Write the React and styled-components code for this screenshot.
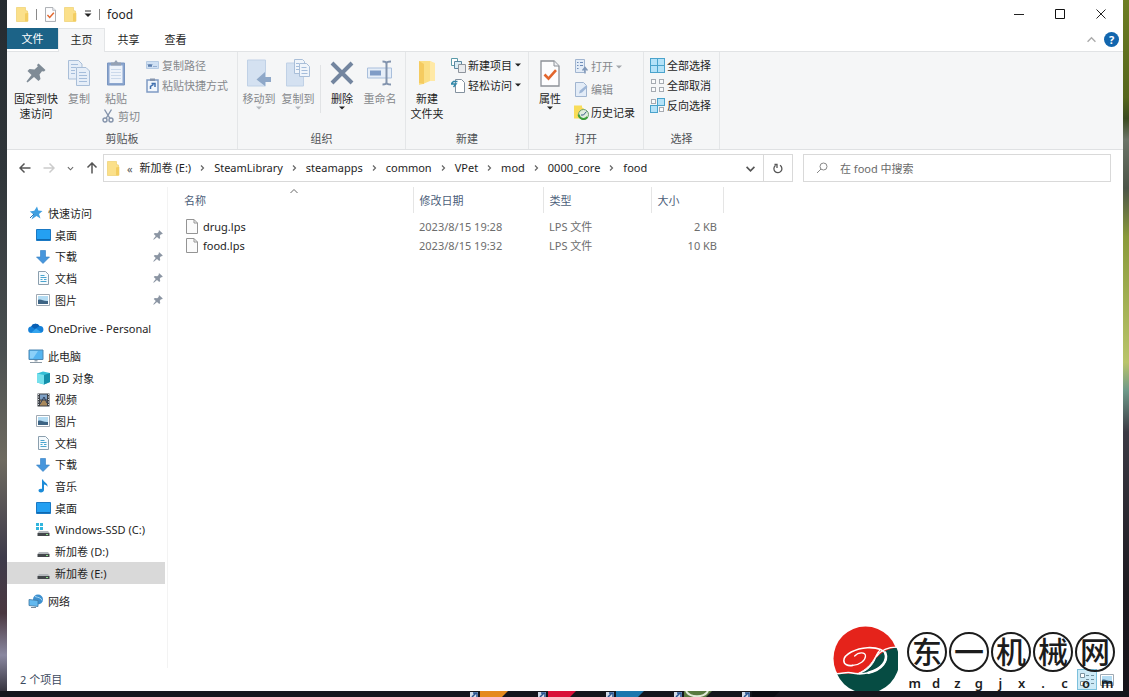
import React from 'react'
import styled, { createGlobalStyle } from 'styled-components'

const GlobalStyle = createGlobalStyle`
*{
    box-sizing: border-box;
}
body{
    margin: 0;
    font-family: 'Noto Sans', 'Noto Sans CJK SC', sans-serif;
    font-size: 11px;
    line-height: 15px;
    color: #1e1e1e;
}
button, input{
    font: inherit;
    color: inherit;
    padding: 0;
    border: 0;
    background: none;
}
a{
    color: inherit;
    text-decoration: none;
}
ul{
    list-style: none;
    margin: 0;
    padding: 0;
}
svg{
    display: block;
    flex: none;
}
`

/* ---------- icons ---------- */

const Folder = ({ w = 13, h = 15 }) => (
    <svg width={w} height={h} viewBox="0 0 13 15">
        <path d="M0.5 0.5h9v3l2 .5v10.5h-11z" fill="#fbe08a" stroke="#eccb62" strokeWidth=".6" />
        <path d="M9 6.5l3.3-.7v8.5H9z" fill="#f3cd60" />
    </svg>
)

const BigFolder = () => (
    <svg width="19" height="26" viewBox="0 0 19 26">
        <path d="M1 1h11l5 3v17h-5l-7 3-4 1z" fill="#fbdf86" />
        <path d="M1 1l5 3v20l-5-1z" fill="#f5cb60" />
        <path d="M12 1l5 2v18h-5z" fill="#ffe9a6" />
    </svg>
)

const CheckDoc = ({ w = 13, h = 15 }) => (
    <svg width={w} height={h} viewBox="0 0 20 27">
        <path d="M1 1h13l5 5v20H1z" fill="#fdfdfe" stroke="#8d9198" strokeWidth="1.3" />
        <path d="M14 1v5h5" fill="#eef0f3" stroke="#8d9198" />
        <path d="M4.5 14.5l4 4.2 7.5-8.5" fill="none" stroke="#e2662d" strokeWidth="2.6" />
    </svg>
)

const Pin = ({ size = 11, color = '#8b95a3' }) => (
    <svg width={size} height={size} viewBox="0 0 20 20">
        <path d="M12.500 .5l7 6.500-1.500 1.500-2-.2-2.500 3.200 1 4.500-2 2-4.500-4L1.500 19.500.5 18.500l5-6.500-4-4 2-2 5 .5 3.300-3-.8-1.500z" fill={color} />
    </svg>
)

const CopyDocs = () => (
    <svg width="24" height="28" viewBox="0 0 24 28">
        <g fill="#e6eef8" stroke="#a9bed8">
            <path d="M1.500 1.500h10l3.500 3.500v15h-13.500z" />
            <path d="M9.500 8.500h9.500l3.500 3.500v14.500h-13z" />
        </g>
        <path d="M4 5.500h7M4 8.500h5M4 11.500h4M4 14.500h4M12 13.500h7M12 16.500h8M12 19.500h8M12 22.500h8" stroke="#a5bddb" />
    </svg>
)

const Clipboard = () => (
    <svg width="20" height="28" viewBox="0 0 20 28">
        <path d="M1.500 4h17v22h-17z" fill="#8ba6cf" stroke="#7a96c1" />
        <path d="M3.500 6.500h13v17.500h-13z" fill="#eef3fa" />
        <path d="M5 3.500h3l2-2.500 2 2.500h3v3h-10z" fill="#95a1b3" />
        <path d="M5 10.500h10M5 13.500h10M5 16.500h10M5 19.500h10" stroke="#cbd9eb" />
    </svg>
)

const Scissors = () => (
    <svg width="12" height="14" viewBox="0 0 12 14" fill="none" stroke="#8493ab" strokeWidth="1.400">
        <path d="M2.500 0.500L8 9.500M9.500 0.500L4 9.500" />
        <circle cx="3" cy="11" r="2" />
        <circle cx="9" cy="11" r="2" />
    </svg>
)

const PathIcon = () => (
    <svg width="13" height="10" viewBox="0 0 13 10">
        <path d="M.5 1.500h12v7h-12z" fill="#cfe0f3" stroke="#b6cbe3" />
        <path d="M2 4l1 3 1-3 1 3 1-3M7.500 6.500h1M9.500 6.500h1" fill="none" stroke="#5d7fae" />
    </svg>
)

const ShortcutIcon = () => (
    <svg width="13" height="15" viewBox="0 0 13 15">
        <path d="M1 2h11v12H1z" fill="#f1f6fc" stroke="#7f9bc4" strokeWidth="1.500" />
        <path d="M4 .5h5v2.500H4z" fill="#8594ac" />
        <path d="M4.500 11V8.500l3-2M5.500 5.500h3.500v3.500" fill="none" stroke="#3f6fae" strokeWidth="1.500" />
    </svg>
)

const MoveTo = () => (
    <svg width="26" height="28" viewBox="0 0 26 28">
        <path d="M1.500 1h18v26h-18z" fill="#d4e1f1" stroke="#c0d1e6" />
        <path d="M25 18h-6v-5l-8.500 7.500 8.500 6.500v-4h6z" fill="#8fa8c8" />
    </svg>
)

const CopyTo = () => (
    <svg width="26" height="28" viewBox="0 0 26 28">
        <path d="M1.500 4h17v23h-17z" fill="#d4e1f1" stroke="#c0d1e6" />
        <g fill="#f0f5fb" stroke="#a9bed8">
            <path d="M9.500 .5h8l2 2v12h-10z" />
            <path d="M14.500 4.500h7l3 3v10h-10z" />
        </g>
        <path d="M16.500 8.500h5M16.500 11.500h6M16.500 14.500h6M11 4.500h3M11 7.500h3M11 10.500h3" stroke="#a5bddb" />
    </svg>
)

const DeleteX = () => (
    <svg width="24" height="26" viewBox="0 0 24 26">
        <path d="M2 3l20 20M22 3L2 23" stroke="#73859f" strokeWidth="4" />
    </svg>
)

const Rename = () => (
    <svg width="26" height="26" viewBox="0 0 26 26">
        <path d="M.5 8h24v10H.5z" fill="#e6eef8" stroke="#a9bfdc" />
        <path d="M3 10.500h11v5H3z" fill="#7f9cc6" />
        <path d="M15.500 1.500c3 0 4 .5 4 2v19c0 1.500-1 2-4 2M24 1.500c-3 0-4.500.5-4.500 2M24 24.500c-3 0-4.500-.5-4.500-2" fill="none" stroke="#8293ad" strokeWidth="2" />
    </svg>
)

const NewItem = () => (
    <svg width="15" height="15" viewBox="0 0 15 15">
        <path d="M.5.5h6v7h-6z" fill="#fff" stroke="#5b9aa9" />
        <path d="M3.500 3.500h7v7h-7z" fill="#d9ecf4" stroke="#5b87a0" />
        <path d="M7.500 6.500h7v8h-7z" fill="#e9ebee" stroke="#8e949c" />
    </svg>
)

const EasyAccess = () => (
    <svg width="15" height="15" viewBox="0 0 15 15">
        <path d="M4.500 1.500h6l3 3v10h-9z" fill="#fff" stroke="#83919f" />
        <path d="M6.500 3.500H2.500L0 6h5L2.500 9" fill="none" stroke="#2f86a8" strokeWidth="1.400" />
    </svg>
)

const OpenIcon = () => (
    <svg width="13" height="15" viewBox="0 0 13 15">
        <path d="M.5.5h9v13h-9z" fill="#e3ecf7" stroke="#a1b5d0" />
        <path d="M2 3.500h1.500M5 3.500h3M2 6.500h1.500M5 6.500h3M2 9.500h1.500" stroke="#6f8db8" />
        <path d="M10 14.500V9.500M7.500 11.500L10 8.500l2.500 3" fill="none" stroke="#7f97b8" strokeWidth="1.500" />
    </svg>
)

const EditIcon = () => (
    <svg width="13" height="15" viewBox="0 0 13 15">
        <path d="M.5.5h8l3 3v11H.5z" fill="#e3ecf7" stroke="#a1b5d0" />
        <path d="M4 11.500l1-3 6-5 1.500 1.500-5.500 5.500z" fill="#9eb6d6" />
    </svg>
)

const HistoryIcon = () => (
    <svg width="15" height="15" viewBox="0 0 15 15">
        <path d="M0 .5h8v2l2 1v10H0z" fill="#f8dc59" />
        <circle cx="9.500" cy="9.500" r="5" fill="#e0ecdf" stroke="#6b9f6c" />
        <path d="M4.500 9.500c1 4.500 6 6 9 2.500" fill="none" stroke="#3d9e3a" strokeWidth="2" />
        <path d="M9.500 10l3-3.500M9.500 10H7" stroke="#3a5f8a" fill="none" />
    </svg>
)

const boxes = [[0, 0], [1, 0], [0, 1], [1, 1]]

// picked: the squares that are drawn filled
const SelectIcon = ({ picked }) => (
    <svg width="15" height="15" viewBox="0 0 15 15">
        {boxes.map(([x, y], i) => {
            const on = picked.includes(i)
            return on
                ? <rect key={i} x={x * 7 + 0.5} y={y * 7 + 0.5} width="7" height="7" fill="#b4e2f8" stroke="#4aa3cc" />
                : <rect key={i} x={x * 8 + 1.5} y={y * 8 + 1.5} width="4" height="4" fill="#fafbfc" stroke="#a6abb2" />
        })}
    </svg>
)

const Star = () => (
    <svg width="14" height="14" viewBox="0 0 14 14">
        <path d="M8 .5l1.300 4 4.200.5-3.500 3 1.500 4.500-4-2.500-5 3.500 2-5L.8 5.500l4.500-.7z" fill="#3f9fe0" />
        <path d="M1 12l4-4" stroke="#2575b4" />
    </svg>
)

const DesktopIcon = () => (
    <svg width="15" height="14" viewBox="0 0 15 14">
        <path d="M.5 1.500h14v11H.5z" fill="#24a0f2" stroke="#1a79c4" />
        <path d="M1 11.500h13" stroke="#0f69b0" />
    </svg>
)

const DownIcon = () => (
    <svg width="14" height="14" viewBox="0 0 14 14">
        <path d="M4.500.5h5v6.500H13.500L7 13.500.5 7h4z" fill="#4796dc" stroke="#2f7cc2" strokeWidth=".6" />
    </svg>
)

const DocIcon = () => (
    <svg width="13" height="14" viewBox="0 0 13 14">
        <path d="M1.500.5h7l3 3v10h-10z" fill="#f5fafd" stroke="#8b9fae" />
        <path d="M3.500 4.500h4M3.500 6.500h6M3.500 8.500h2M7 8.500h2.500M3.500 10.500h6" stroke="#4aa5cf" />
    </svg>
)

const PictureIcon = () => (
    <svg width="14" height="12" viewBox="0 0 14 12">
        <path d="M.5.5h13v11H.5z" fill="#fff" stroke="#9fa9b3" />
        <path d="M2 2h10v8H2z" fill="#b4dcf3" />
        <path d="M2 6c3-1.500 5 1.500 10 1v3H2z" fill="#3d6484" />
    </svg>
)

const CloudIcon = () => (
    <svg width="16" height="12" viewBox="0 0 16 12">
        <path d="M3.500 11a3.200 3.200 0 01-.3-6.400A4.600 4.600 0 0111.500 4a3.500 3.500 0 01.8 7z" fill="#1480d8" />
        <path d="M3.200 4.600A4.600 4.600 0 0111.500 4L7 7z" fill="#0a5fb3" />
        <path d="M3 11l5-4.500 5.500 4c-.5.400-1 .5-1.500.5z" fill="#35a5ee" />
    </svg>
)

const PcIcon = () => (
    <svg width="16" height="15" viewBox="0 0 16 15">
        <path d="M1 1h14v9.500H1z" fill="#55b4f0" stroke="#4c87b2" />
        <path d="M2 2h8L5 9.500H2z" fill="#8cd0f8" />
        <path d="M6.500 11h3v1.500h-3z" fill="#9ba9b5" />
        <path d="M2 13.500h12" stroke="#8b99a5" />
    </svg>
)

const CubeIcon = () => (
    <svg width="15" height="14" viewBox="0 0 15 14">
        <path d="M1 2.500L7 .5l7 1.500v9l-6 2.500-7-2z" fill="#35bfd6" />
        <path d="M1 2.500l7 1.500v9.500l-7-2z" fill="#75e0ec" />
        <path d="M8 4l6-2v9l-6 2.500z" fill="#1590ab" />
    </svg>
)

const VideoIcon = () => (
    <svg width="13" height="14" viewBox="0 0 13 14">
        <path d="M.5.5h12v13H.5z" fill="#3c4046" />
        <path d="M3 1.500h7v5H3z" fill="#7d9fc4" />
        <path d="M3 7.500h7v5H3z" fill="#a9895c" />
        <path d="M1.500 1v12M11.500 1v12" stroke="#d9dde2" strokeDasharray="1 1.500" />
        <path d="M3 11l4-7 3 6" fill="none" stroke="#2d3d5a" />
    </svg>
)

const NoteIcon = () => (
    <svg width="13" height="14" viewBox="0 0 13 14">
        <path d="M6 .5c.5 3 5 3 4.500 7.500-.5-1.500-2-2.500-3.500-2.500V11c0 1.500-1.500 2.500-3 2.500S1.500 12.500 1.500 11.500 3 9.500 5 10V.5z" fill="#1b8bd8" />
    </svg>
)

const DriveIcon = ({ system }) => (
    <svg width="14" height="14" viewBox="0 0 14 14">
        {system && <path d="M0 0h3v3H0zM4 0h3v3H4zM0 4h3v3H0zM4 4h3v3H4z" fill="#31b5dd" />}
        <path d="M3 8h9l1.500 2H1.500z" fill="#b4b8bc" />
        <path d="M1.500 10h12v3h-12z" fill="#43474b" />
        <path d="M10 11.500h2" stroke="#8be08a" />
    </svg>
)

const NetworkIcon = () => (
    <svg width="16" height="14" viewBox="0 0 16 14">
        <circle cx="10" cy="5.500" r="5" fill="#3d90cf" />
        <path d="M7 2.500c3 1 6 1 7 4" fill="none" stroke="#a5d5f2" />
        <path d="M1 5.500l9 1v6l-9-1z" fill="#63b9ef" stroke="#4077a1" strokeWidth=".8" />
        <path d="M3 13.500h5" stroke="#75889a" />
    </svg>
)

const FileIcon = () => (
    <svg width="12" height="15" viewBox="0 0 12 15">
        <path d="M.5.5h7.500l3.500 3.500v10.500H.5z" fill="#fbfbfb" stroke="#949494" />
        <path d="M8 .5V4h3.500" fill="none" stroke="#949494" />
    </svg>
)

const Chevron = ({ d, w = 8, h = 8, color = '#666', stroke = 1.2 }) => (
    <svg width={w} height={h} viewBox="0 0 8 8">
        <path d={d} fill="none" stroke={color} strokeWidth={stroke} />
    </svg>
)

const Caret = ({ color = '#222' }) => (
    <svg width="6" height="4" viewBox="0 0 6 4">
        <path d="M0 .5h6L3 3.500z" fill={color} />
    </svg>
)

const Arrow = ({ d, color }) => (
    <svg width="12" height="12" viewBox="0 0 12 12">
        <path d={d} fill="none" stroke={color} strokeWidth="1.500" />
    </svg>
)

const Disc = () => (
    <svg width="65" height="65" viewBox="0 0 66 66">
        <circle cx="33" cy="33" r="32.500" fill="#e5231b" />
        <path d="M4 48.500h22C38 44 44 24 64.500 22A32.500 32.500 0 014 48.500z" fill="#064c43" />
        <g fill="none" stroke="#fff" strokeLinecap="round">
            <path d="M4 48.500c6 0 9-2 14-1 6 1.500 12 1.500 18 0 10-2.500 18-9 18-16 0-7-9-10-19-9.500-12 .5-24 7-24 13 0 4 4 6 9 5" strokeWidth="1.600" />
            <path d="M20 40c7-.5 13-5 13-9.500 0-4-7-4.500-11 0" strokeWidth="1.300" />
            <path d="M53 27c3 8-3 17-17 20.500" strokeWidth="2.600" />
            <path d="M64.500 21.500c-12 0-17 5-20 9" strokeWidth="1.300" />
        </g>
        <path d="M48 24C43 27 43 40 25 48.500 35 46 40 40 43 33c2-4 3-6 5-9z" fill="#fff" stroke="#fff" />
    </svg>
)

const Shortcut = ({ fill, ring }) => (
    <svg width="68" height="6" viewBox="0 0 68 6">
        <path d="M0 1h8v5H0z" fill="#cfdbe8" />
        <path d="M2 6l4-4M3 2h4v4" stroke="#28538f" strokeWidth="1.500" fill="none" />
        <path d="M10 0h28l-6 6H10z" fill={fill} />
        {ring && <path d="M12 0c4 7 18 7 22 0" fill="none" stroke="#dfe9d6" strokeWidth="2" />}
    </svg>
)

/* ---------- data ---------- */

const quickAccess = [
    { name: '快速访问', icon: <Star />, root: true },
    { name: '桌面', icon: <DesktopIcon />, pinned: true },
    { name: '下载', icon: <DownIcon />, pinned: true },
    { name: '文档', icon: <DocIcon />, pinned: true },
    { name: '图片', icon: <PictureIcon />, pinned: true },
]
const oneDrive = [{ name: 'OneDrive - Personal', icon: <CloudIcon />, root: true }]
const thisPc = [
    { name: '此电脑', icon: <PcIcon />, root: true },
    { name: '3D 对象', icon: <CubeIcon /> },
    { name: '视频', icon: <VideoIcon /> },
    { name: '图片', icon: <PictureIcon /> },
    { name: '文档', icon: <DocIcon /> },
    { name: '下载', icon: <DownIcon /> },
    { name: '音乐', icon: <NoteIcon /> },
    { name: '桌面', icon: <DesktopIcon /> },
    { name: 'Windows-SSD (C:)', icon: <DriveIcon system /> },
    { name: '新加卷 (D:)', icon: <DriveIcon /> },
    { name: '新加卷 (E:)', icon: <DriveIcon />, selected: true },
]
const network = [{ name: '网络', icon: <NetworkIcon />, root: true }]
const navGroups = [quickAccess, oneDrive, thisPc, network]

const crumbs = ['新加卷 (E:)', 'SteamLibrary', 'steamapps', 'common', 'VPet', 'mod', '0000_core', 'food']

const files = [
    { name: 'drug.lps', date: '2023/8/15 19:28', type: 'LPS 文件', size: '2 KB' },
    { name: 'food.lps', date: '2023/8/15 19:32', type: 'LPS 文件', size: '10 KB' },
]

/* ---------- parts ---------- */

const Big = ({ icon, children, caret, muted, width }) => (
    <BigButton $muted={muted} $width={width}>
        <BigIcon>{icon}</BigIcon>
        <span>{children}</span>
        {caret && <Caret color={muted ? '#b3b7bc' : '#222'} />}
    </BigButton>
)

const Small = ({ icon, children, caret, muted }) => (
    <SmallButton $muted={muted}>
        <SmallIcon>{icon}</SmallIcon>
        {children}
        {caret && <Caret color={muted ? '#a3a7ac' : '#222'} />}
    </SmallButton>
)

const Group = ({ title, width, children }) => (
    <GroupStyled $width={width}>
        <div className="body">{children}</div>
        <div className="title">{title}</div>
    </GroupStyled>
)

export default function App() {
    return (
        <Desktop>
            <GlobalStyle />
            <Window>
                <TitleBar>
                    <Folder />
                    <Divider />
                    <IconButton aria-label="属性"><CheckDoc /></IconButton>
                    <IconButton aria-label="新建文件夹"><Folder /></IconButton>
                    <IconButton aria-label="自定义快速访问工具栏">
                        <svg width="8" height="8" viewBox="0 0 8 8">
                            <path d="M1 1h6" stroke="#333" />
                            <path d="M.5 3.500h7L4 7z" fill="#222" />
                        </svg>
                    </IconButton>
                    <Divider />
                    <span className="name">food</span>
                    <WindowButtons>
                        <IconButton aria-label="最小化">
                            <svg width="10" height="10" viewBox="0 0 10 10"><path d="M0 5.500h10" stroke="#222" /></svg>
                        </IconButton>
                        <IconButton aria-label="最大化">
                            <svg width="10" height="10" viewBox="0 0 10 10"><path d="M.5.5h9v9h-9z" fill="none" stroke="#111" /></svg>
                        </IconButton>
                        <IconButton aria-label="关闭">
                            <svg width="10" height="10" viewBox="0 0 10 10"><path d="M.5.5l9 9M9.500.5l-9 9" stroke="#222" /></svg>
                        </IconButton>
                    </WindowButtons>
                </TitleBar>

                <Tabs>
                    <FileTab>文件</FileTab>
                    <Tab $active>主页</Tab>
                    <Tab>共享</Tab>
                    <Tab>查看</Tab>
                    <div className="right">
                        <IconButton aria-label="折叠功能区"><Chevron d="M.5 6L4 2.500 7.500 6" color="#aaa" w={9} h={9} /></IconButton>
                        <Help aria-label="帮助">?</Help>
                    </div>
                </Tabs>

                <Ribbon>
                    <Group title="剪贴板" width={231}>
                        <Big icon={<Pin size={20} color="#7f8b96" />} width={58}>固定到快<br />速访问</Big>
                        <Big icon={<CopyDocs />} muted width={28}>复制</Big>
                        <PasteStack>
                            <Big icon={<Clipboard />} muted width={30}>粘贴</Big>
                            <Small icon={<Scissors />} muted>剪切</Small>
                        </PasteStack>
                        <SmallStack>
                            <Small icon={<PathIcon />} muted>复制路径</Small>
                            <Small icon={<ShortcutIcon />} muted>粘贴快捷方式</Small>
                        </SmallStack>
                    </Group>
                    <Group title="组织" width={168}>
                        <Big icon={<MoveTo />} muted caret width={42}>移动到</Big>
                        <Big icon={<CopyTo />} muted caret width={36}>复制到</Big>
                        <Separator />
                        <Big icon={<DeleteX />} caret width={36}>删除</Big>
                        <Big icon={<Rename />} muted width={40}>重命名</Big>
                    </Group>
                    <Group title="新建" width={123}>
                        <Big icon={<BigFolder />} width={42}>新建<br />文件夹</Big>
                        <SmallStack>
                            <Small icon={<NewItem />} caret>新建项目</Small>
                            <Small icon={<EasyAccess />} caret>轻松访问</Small>
                        </SmallStack>
                    </Group>
                    <Group title="打开" width={115}>
                        <Big icon={<CheckDoc w={20} h={27} />} caret width={42}>属性</Big>
                        <SmallStack $roomy>
                            <Small icon={<OpenIcon />} muted caret>打开</Small>
                            <Small icon={<EditIcon />} muted>编辑</Small>
                            <Small icon={<HistoryIcon />}>历史记录</Small>
                        </SmallStack>
                    </Group>
                    <Group title="选择" width={76}>
                        <SmallStack $inset>
                            <Small icon={<SelectIcon picked={[0, 1, 2, 3]} />}>全部选择</Small>
                            <Small icon={<SelectIcon picked={[]} />}>全部取消</Small>
                            <Small icon={<SelectIcon picked={[1, 2]} />}>反向选择</Small>
                        </SmallStack>
                    </Group>
                </Ribbon>

                <AddressRow>
                    <div className="arrows">
                        <IconButton aria-label="返回"><Arrow d="M11.500 6H1M5.500 1.500L1 6l4.500 4.500" color="#555" /></IconButton>
                        <IconButton aria-label="前进"><Arrow d="M.5 6H11M6.500 1.500L11 6l-4.500 4.500" color="#ccc" /></IconButton>
                        <IconButton aria-label="最近浏览的位置"><Chevron d="M1 2.500L4 5.500 7 2.500" w={7} h={7} /></IconButton>
                        <IconButton aria-label="上移"><Arrow d="M6 11.500V1M1.500 5.500L6 1l4.500 4.500" color="#555" /></IconButton>
                    </div>
                    <AddressBox>
                        <Folder />
                        <span className="back">«</span>
                        {crumbs.map((crumb, i) => (
                            <React.Fragment key={crumb}>
                                {i > 0 && <Chevron d="M2.500 1.500L5 4 2.500 6.500" w={9} />}
                                <a href="#">{crumb}</a>
                            </React.Fragment>
                        ))}
                        <IconButton className="drop" aria-label="以前的位置"><Chevron d="M.5 2.500L4 6 7.500 2.500" color="#555" w={9} h={9} stroke={1.5} /></IconButton>
                        <IconButton className="refresh" aria-label="刷新">
                            <svg width="10" height="11" viewBox="0 0 10 11">
                                <path d="M2.500 2.500A4 4 0 107 2.300M1.500 1.500h2.500V5" fill="none" stroke="#555" strokeWidth="1.300" />
                            </svg>
                        </IconButton>
                    </AddressBox>
                    <SearchBox>
                        <svg width="12" height="12" viewBox="0 0 12 12">
                            <path d="M1 11l4-4" stroke="#888" />
                            <circle cx="7.500" cy="4.500" r="3.500" fill="none" stroke="#888" />
                        </svg>
                        <input type="search" aria-label="搜索" placeholder="在 food 中搜索" />
                    </SearchBox>
                </AddressRow>

                <Content>
                    <Nav>
                        {navGroups.map((group) => (
                            <ul key={group[0].name}>
                                {group.map((item) => (
                                    <NavItem key={item.name} $root={item.root} $selected={item.selected}>
                                        <a href="#">
                                            <span className="icon">{item.icon}</span>
                                            {item.name}
                                        </a>
                                        {item.pinned && <Pin size={10} />}
                                    </NavItem>
                                ))}
                            </ul>
                        ))}
                    </Nav>
                    <FilePane>
                        <FileTable>
                            <colgroup>
                                <col className="name" />
                                <col className="date" />
                                <col className="type" />
                                <col className="size" />
                            </colgroup>
                            <thead>
                                <tr>
                                    <th>
                                        <SortMark><Chevron d="M.5 6L4 2.500 7.500 6" stroke={1} /></SortMark>
                                        名称
                                    </th>
                                    <th>修改日期</th>
                                    <th>类型</th>
                                    <th>大小</th>
                                </tr>
                            </thead>
                            <tbody>
                                {files.map((file) => (
                                    <tr key={file.name}>
                                        <td><FileName href="#"><FileIcon />{file.name}</FileName></td>
                                        <td>{file.date}</td>
                                        <td>{file.type}</td>
                                        <td>{file.size}</td>
                                    </tr>
                                ))}
                            </tbody>
                        </FileTable>
                    </FilePane>
                </Content>

                <StatusBar>
                    <span>2 个项目</span>
                    <div className="views">
                        <ViewButton $active aria-label="详细信息">
                            <svg width="16" height="14" viewBox="0 0 16 14">
                                <path d="M1.500.5h4v4h-4zM1.500 8.500h4v4h-4z" fill="#fff" stroke="#7b93a0" />
                                <path d="M7 2.500h3M12 2.500h3M7 6.500h3M12 6.500h3M7 10.500h3M12 10.500h3" stroke="#71909f" />
                            </svg>
                        </ViewButton>
                        <ViewButton aria-label="大缩略图"><PictureIcon /></ViewButton>
                    </div>
                </StatusBar>
            </Window>

            <Shortcuts>
                <Shortcut fill="#e58a1c" />
                <Shortcut fill="#d9113a" />
                <Shortcut fill="#1c77ae" />
                <Shortcut fill="#58793f" ring />
                <Shortcut fill="#0b0d12" />
            </Shortcuts>

            <Watermark>
                <Disc />
                <div>
                    <div className="rings">
                        {[...'东一机械网'].map((char) => <span key={char}>{char}</span>)}
                    </div>
                    <div className="domain">
                        {[...'mdzgjx.com'].map((char, i) => <span key={i}>{char}</span>)}
                    </div>
                </div>
            </Watermark>
        </Desktop>
    )
}

/* ---------- styles ---------- */

const Desktop = styled.div`
    position: relative;
    min-height: 100vh;
    display: flex;
    flex-direction: column;
    padding: 0 6px 0 7px;
    background:
        linear-gradient(#14161c, #14161c) bottom / 100% 6px no-repeat,
        linear-gradient(#6d7d22, #55661c 14%, #3a4a20 17%, #6b7468 20%, #4c5548 27%, #8a9a3a 34%, #b9c46a 52%, #6f9a8a 56%, #3b3a44 62%, #1c1a20 85%, #16141a) right / 6px 100% no-repeat,
        linear-gradient(#252b30, #30363a 25%, #4a4f50 50%, #6e6a60 66%, #3e3b4a 80%, #4a3840 88%, #8a88a0 94%, #2a2830) left / 7px 100% no-repeat,
        #14161c;
`

const Window = styled.div`
    flex: 1;
    display: flex;
    flex-direction: column;
    background: #fff;
`

const IconButton = styled.button`
    display: flex;
    align-items: center;
    justify-content: center;
`

const TitleBar = styled.header`
    display: flex;
    align-items: center;
    gap: 7px;
    height: 28px;
    padding: 0 2px 0 9px;
    .name{
        font-size: 12px;
    }
`

const Divider = styled.span`
    width: 1px;
    height: 11px;
    background: #8a8a8a;
`

const WindowButtons = styled.div`
    display: flex;
    margin-left: auto;
    button{
        width: 41px;
        height: 28px;
    }
`

const Tabs = styled.nav`
    display: flex;
    height: 23px;
    .right{
        display: flex;
        align-items: center;
        gap: 8px;
        margin-left: auto;
        padding-right: 4px;
    }
`

const Tab = styled.button`
    width: 47px;
    padding-bottom: 2px;
    border: 1px solid ${(props) => (props.$active ? '#e3e5e7' : 'transparent')};
    border-bottom: 0;
    background: ${(props) => (props.$active ? '#f5f6f7' : 'none')};
    margin-bottom: ${(props) => (props.$active ? '-1px' : '0')};
    z-index: 1;
`

const FileTab = styled.button`
    width: 51px;
    height: 21px;
    background: #1c6387;
    color: #fff;
`

const Help = styled.button`
    width: 15px;
    height: 15px;
    border-radius: 50%;
    background: #1266ae;
    color: #fff;
    font-weight: bold;
`

const Ribbon = styled.div`
    display: flex;
    height: 99px;
    background: #f5f6f7;
    border-top: 1px solid #e1e3e5;
    border-bottom: 1px solid #dfe1e3;
`

const GroupStyled = styled.section`
    flex: 0 0 ${(props) => props.$width}px;
    display: flex;
    flex-direction: column;
    justify-content: space-between;
    padding: 3px 0;
    border-right: 1px solid #e4e6e8;
    .body{
        display: flex;
        align-items: flex-start;
    }
    .title{
        text-align: center;
        color: #505356;
    }
`

const BigButton = styled.button`
    width: ${(props) => props.$width}px;
    display: flex;
    flex-direction: column;
    align-items: center;
    white-space: nowrap;
    color: ${(props) => (props.$muted ? '#85888c' : '#1e1e1e')};
`

const BigIcon = styled.span`
    display: flex;
    align-items: center;
    height: 36px;
`

const SmallButton = styled.button`
    display: flex;
    align-items: center;
    gap: 3px;
    height: 20px;
    white-space: nowrap;
    color: ${(props) => (props.$muted ? '#85888c' : '#1e1e1e')};
`

const SmallIcon = styled.span`
    display: flex;
    justify-content: center;
    width: 14px;
`

const SmallStack = styled.div`
    padding-left: ${(props) => (props.$inset ? '6px' : '3px')};
    ${SmallButton}{
        height: ${(props) => (props.$roomy ? '23px' : '20px')};
    }
`

const PasteStack = styled.div`
    padding: 0 2px 0 8px;
`

const Separator = styled.span`
    width: 1px;
    height: 48px;
    margin: 10px 3px 0 4px;
    background: #e1e3e5;
`

const AddressRow = styled.div`
    display: flex;
    gap: 10px;
    height: 37px;
    padding: 4px 12px 5px;
    .arrows{
        display: flex;
        gap: 12px;
        width: 74px;
    }
`

const AddressBox = styled.div`
    flex: 1;
    min-width: 0;
    display: flex;
    align-items: center;
    gap: 7px;
    padding-left: 3px;
    border: 1px solid #d9d9d9;
    white-space: nowrap;
    a{
        padding-bottom: 1px;
    }
    .back{
        color: #555;
    }
    .drop{
        margin-left: auto;
        width: 16px;
    }
    .refresh{
        align-self: stretch;
        width: 29px;
        margin-left: -2px;
        border-left: 1px solid #d9d9d9;
    }
`

const SearchBox = styled.label`
    flex: 0 1 308px;
    display: flex;
    align-items: center;
    gap: 12px;
    padding: 0 12px;
    border: 1px solid #d9d9d9;
    input{
        flex: 1;
        min-width: 0;
        outline: 0;
    }
    input::placeholder{
        color: #6b6b6b;
        opacity: 1;
    }
`

const Content = styled.main`
    flex: 1;
    display: flex;
`

const Nav = styled.nav`
    flex: 0 0 161px;
    display: flex;
    flex-direction: column;
    gap: 6px;
    padding: 15px 2px 0 0;
    border-right: 1px solid #f3f3f3;
`

const NavItem = styled.li`
    display: flex;
    align-items: center;
    justify-content: space-between;
    height: 22px;
    padding: 0 2px 0 ${(props) => (props.$root ? '21px' : '28px')};
    background: ${(props) => (props.$selected ? '#d9d9d9' : 'none')};
    &:nth-child(3n){
        height: 21px;
    }
    a{
        display: flex;
        align-items: center;
        gap: 4px;
        white-space: nowrap;
    }
    .icon{
        display: flex;
        justify-content: center;
        width: 16px;
    }
`

const FilePane = styled.section`
    flex: 1;
    min-width: 0;
`

const FileTable = styled.table`
    table-layout: fixed;
    width: 555px;
    border-collapse: collapse;
    .name{
        width: 245px;
    }
    .date{
        width: 130px;
    }
    .type{
        width: 108px;
    }
    .size{
        width: 72px;
    }
    th{
        position: relative;
        height: 26px;
        padding: 0 6px;
        border-right: 1px solid #e5e5e5;
        font-weight: normal;
        text-align: left;
        color: #4c607a;
    }
    td{
        height: 19px;
        padding: 0 6px;
        color: #6d6d6d;
    }
    th:first-child{
        padding-left: 16px;
    }
    td:first-child{
        padding-left: 18px;
    }
    td:last-child{
        text-align: right;
    }
    tbody::before{
        content: '';
        display: block;
        height: 4px;
    }
`

const SortMark = styled.span`
    position: absolute;
    top: 0;
    left: 50%;
`

const FileName = styled.a`
    display: flex;
    align-items: center;
    gap: 5px;
    color: #1e1e1e;
`

const StatusBar = styled.footer`
    display: flex;
    align-items: center;
    height: 23px;
    padding: 0 6px 0 13px;
    color: #3c4a5e;
    .views{
        display: flex;
        margin-left: auto;
    }
`

const ViewButton = styled.button`
    display: flex;
    align-items: center;
    justify-content: center;
    width: 20px;
    height: 21px;
    border: 1px solid ${(props) => (props.$active ? '#7cc0dc' : 'transparent')};
    background: ${(props) => (props.$active ? '#cdeaf6' : 'none')};
`

const Shortcuts = styled.div`
    display: flex;
    justify-content: flex-start;
    height: 6px;
    padding-left: 41.5%;
    overflow: hidden;
`

const Watermark = styled.div`
    position: absolute;
    right: 11px;
    bottom: 6px;
    display: flex;
    gap: 6px;
    pointer-events: none;
    color: #1c1c1c;
    .rings{
        display: flex;
        gap: 2px;
        padding: 6px 0 0 3px;
    }
    .rings span{
        display: flex;
        align-items: center;
        justify-content: center;
        width: 40px;
        height: 40px;
        border: 2px solid #1c1c1c;
        border-radius: 50%;
        font-size: 30px;
        line-height: 36px;
        font-weight: 500;
    }
    .domain{
        display: grid;
        grid-template-columns: repeat(10, 1fr);
        width: 214px;
        padding-top: 4px;
        font-size: 13px;
        font-weight: 600;
        text-align: center;
    }
`
